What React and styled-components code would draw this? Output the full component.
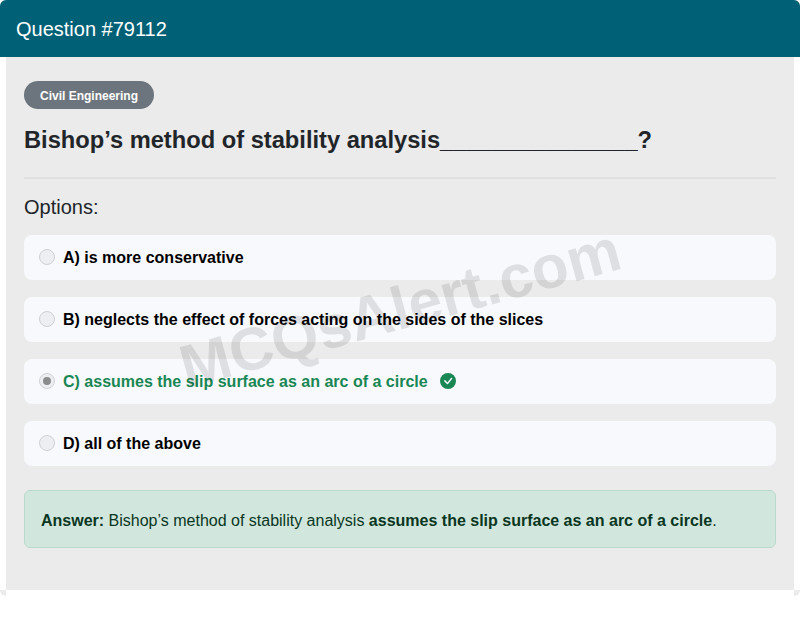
import React from "react";
import styled, { createGlobalStyle } from "styled-components";
import { BsCheckCircleFill } from "react-icons/bs";

const GlobalStyle = createGlobalStyle`
  * {
    box-sizing: border-box;
  }
  body {
    margin: 0;
    background: #fff;
    font-family: "Liberation Sans", Arial, sans-serif;
  }
`;

const Card = styled.div`
  position: relative;
  height: 596px;
  display: flex;
  flex-direction: column;
  padding-bottom: 6px;
  border-radius: 6px 6px 0 0;
  overflow: hidden;

  &::before,
  &::after {
    content: "";
    position: absolute;
    bottom: 0;
    width: 6px;
    height: 6px;
    background: #ebebeb;
  }
  &::before {
    left: 0;
    border-bottom-left-radius: 6px;
  }
  &::after {
    right: 0;
    border-bottom-right-radius: 6px;
  }
`;

const Header = styled.div`
  height: 57px;
  flex: none;
  display: flex;
  align-items: center;
  padding: 1px 16px 0;
  background: #006076;
  color: #fff;
  font-size: 20px;
`;

const Body = styled.div`
  flex: 1;
  margin: 0 6px;
  padding: 24px 18px;
  background: #ebebeb;
`;

const Badge = styled.span`
  display: inline-flex;
  align-items: center;
  height: 28px;
  padding: 1px 16px 0;
  border-radius: 14px;
  background: #6c757d;
  color: #fff;
  font-size: 12px;
  font-weight: 700;
`;

const Title = styled.h2`
  margin: 17px 0 22px;
  color: #212529;
  font-size: 23.68px;
  font-weight: 700;
  line-height: 29px;
`;

const Divider = styled.hr`
  height: 2px;
  margin: 0 0 16px;
  border: 0;
  background: #e0e0e0;
`;

const OptionsLabel = styled.h3`
  margin: 0 0 16px;
  color: #212529;
  font-size: 20px;
  font-weight: 400;
  line-height: 24px;
`;

const OptionList = styled.div`
  display: flex;
  flex-direction: column;
  gap: 17px;
  margin-bottom: 24px;
`;

const Option = styled.div`
  display: flex;
  align-items: center;
  height: 45px;
  padding: 0 15px;
  border-radius: 8px;
  background: #f8f9fc;
  color: ${({ $correct }) => ($correct ? "#198754" : "#000")};
  font-size: 16px;
  font-weight: 700;
`;

const Radio = styled.span`
  flex: none;
  display: flex;
  align-items: center;
  justify-content: center;
  width: 16px;
  height: 16px;
  margin: 0 8px 2px 0;
  border: 1px solid #cfd1d4;
  border-radius: 50%;
  background: #eceef1;

  &::after {
    content: "";
    display: ${({ $checked }) => ($checked ? "block" : "none")};
    width: 8px;
    height: 8px;
    border-radius: 50%;
    background: #8a8c8e;
  }
`;

const CheckIcon = styled(BsCheckCircleFill)`
  margin: 0 0 2px 12px;
  color: #198754;
  font-size: 16px;
`;

const Answer = styled.div`
  padding: 18px 16px 14px;
  border: 1px solid #badbcc;
  border-radius: 6px;
  background: #d1e7dd;
  color: #0a3622;
  font-size: 16px;
  line-height: 24px;
`;

const Watermark = styled.div`
  position: absolute;
  top: 308px;
  left: 400px;
  transform: translate(-50%, -50%) rotate(-15.4deg);
  color: rgba(0, 0, 0, 0.1);
  font-size: 60.5px;
  font-weight: 700;
  white-space: nowrap;
  pointer-events: none;
`;

const options = [
  { text: "A) is more conservative" },
  { text: "B) neglects the effect of forces acting on the sides of the slices" },
  { text: "C) assumes the slip surface as an arc of a circle", correct: true },
  { text: "D) all of the above" },
];

const App = () => (
  <>
    <GlobalStyle />
    <Card>
      <Header>Question #79112</Header>
      <Body>
        <Badge>Civil Engineering</Badge>
        <Title>Bishop’s method of stability analysis_______________?</Title>
        <Divider />
        <OptionsLabel>Options:</OptionsLabel>
        <OptionList>
          {options.map((o) => (
            <Option key={o.text} $correct={o.correct}>
              <Radio $checked={o.correct} />
              {o.text}
              {o.correct && <CheckIcon />}
            </Option>
          ))}
        </OptionList>
        <Answer>
          <strong>Answer:</strong> Bishop’s method of stability analysis{" "}
          <strong>assumes the slip surface as an arc of a circle</strong>.
        </Answer>
      </Body>
      <Watermark>MCQsAlert.com</Watermark>
    </Card>
  </>
);

export default App;
